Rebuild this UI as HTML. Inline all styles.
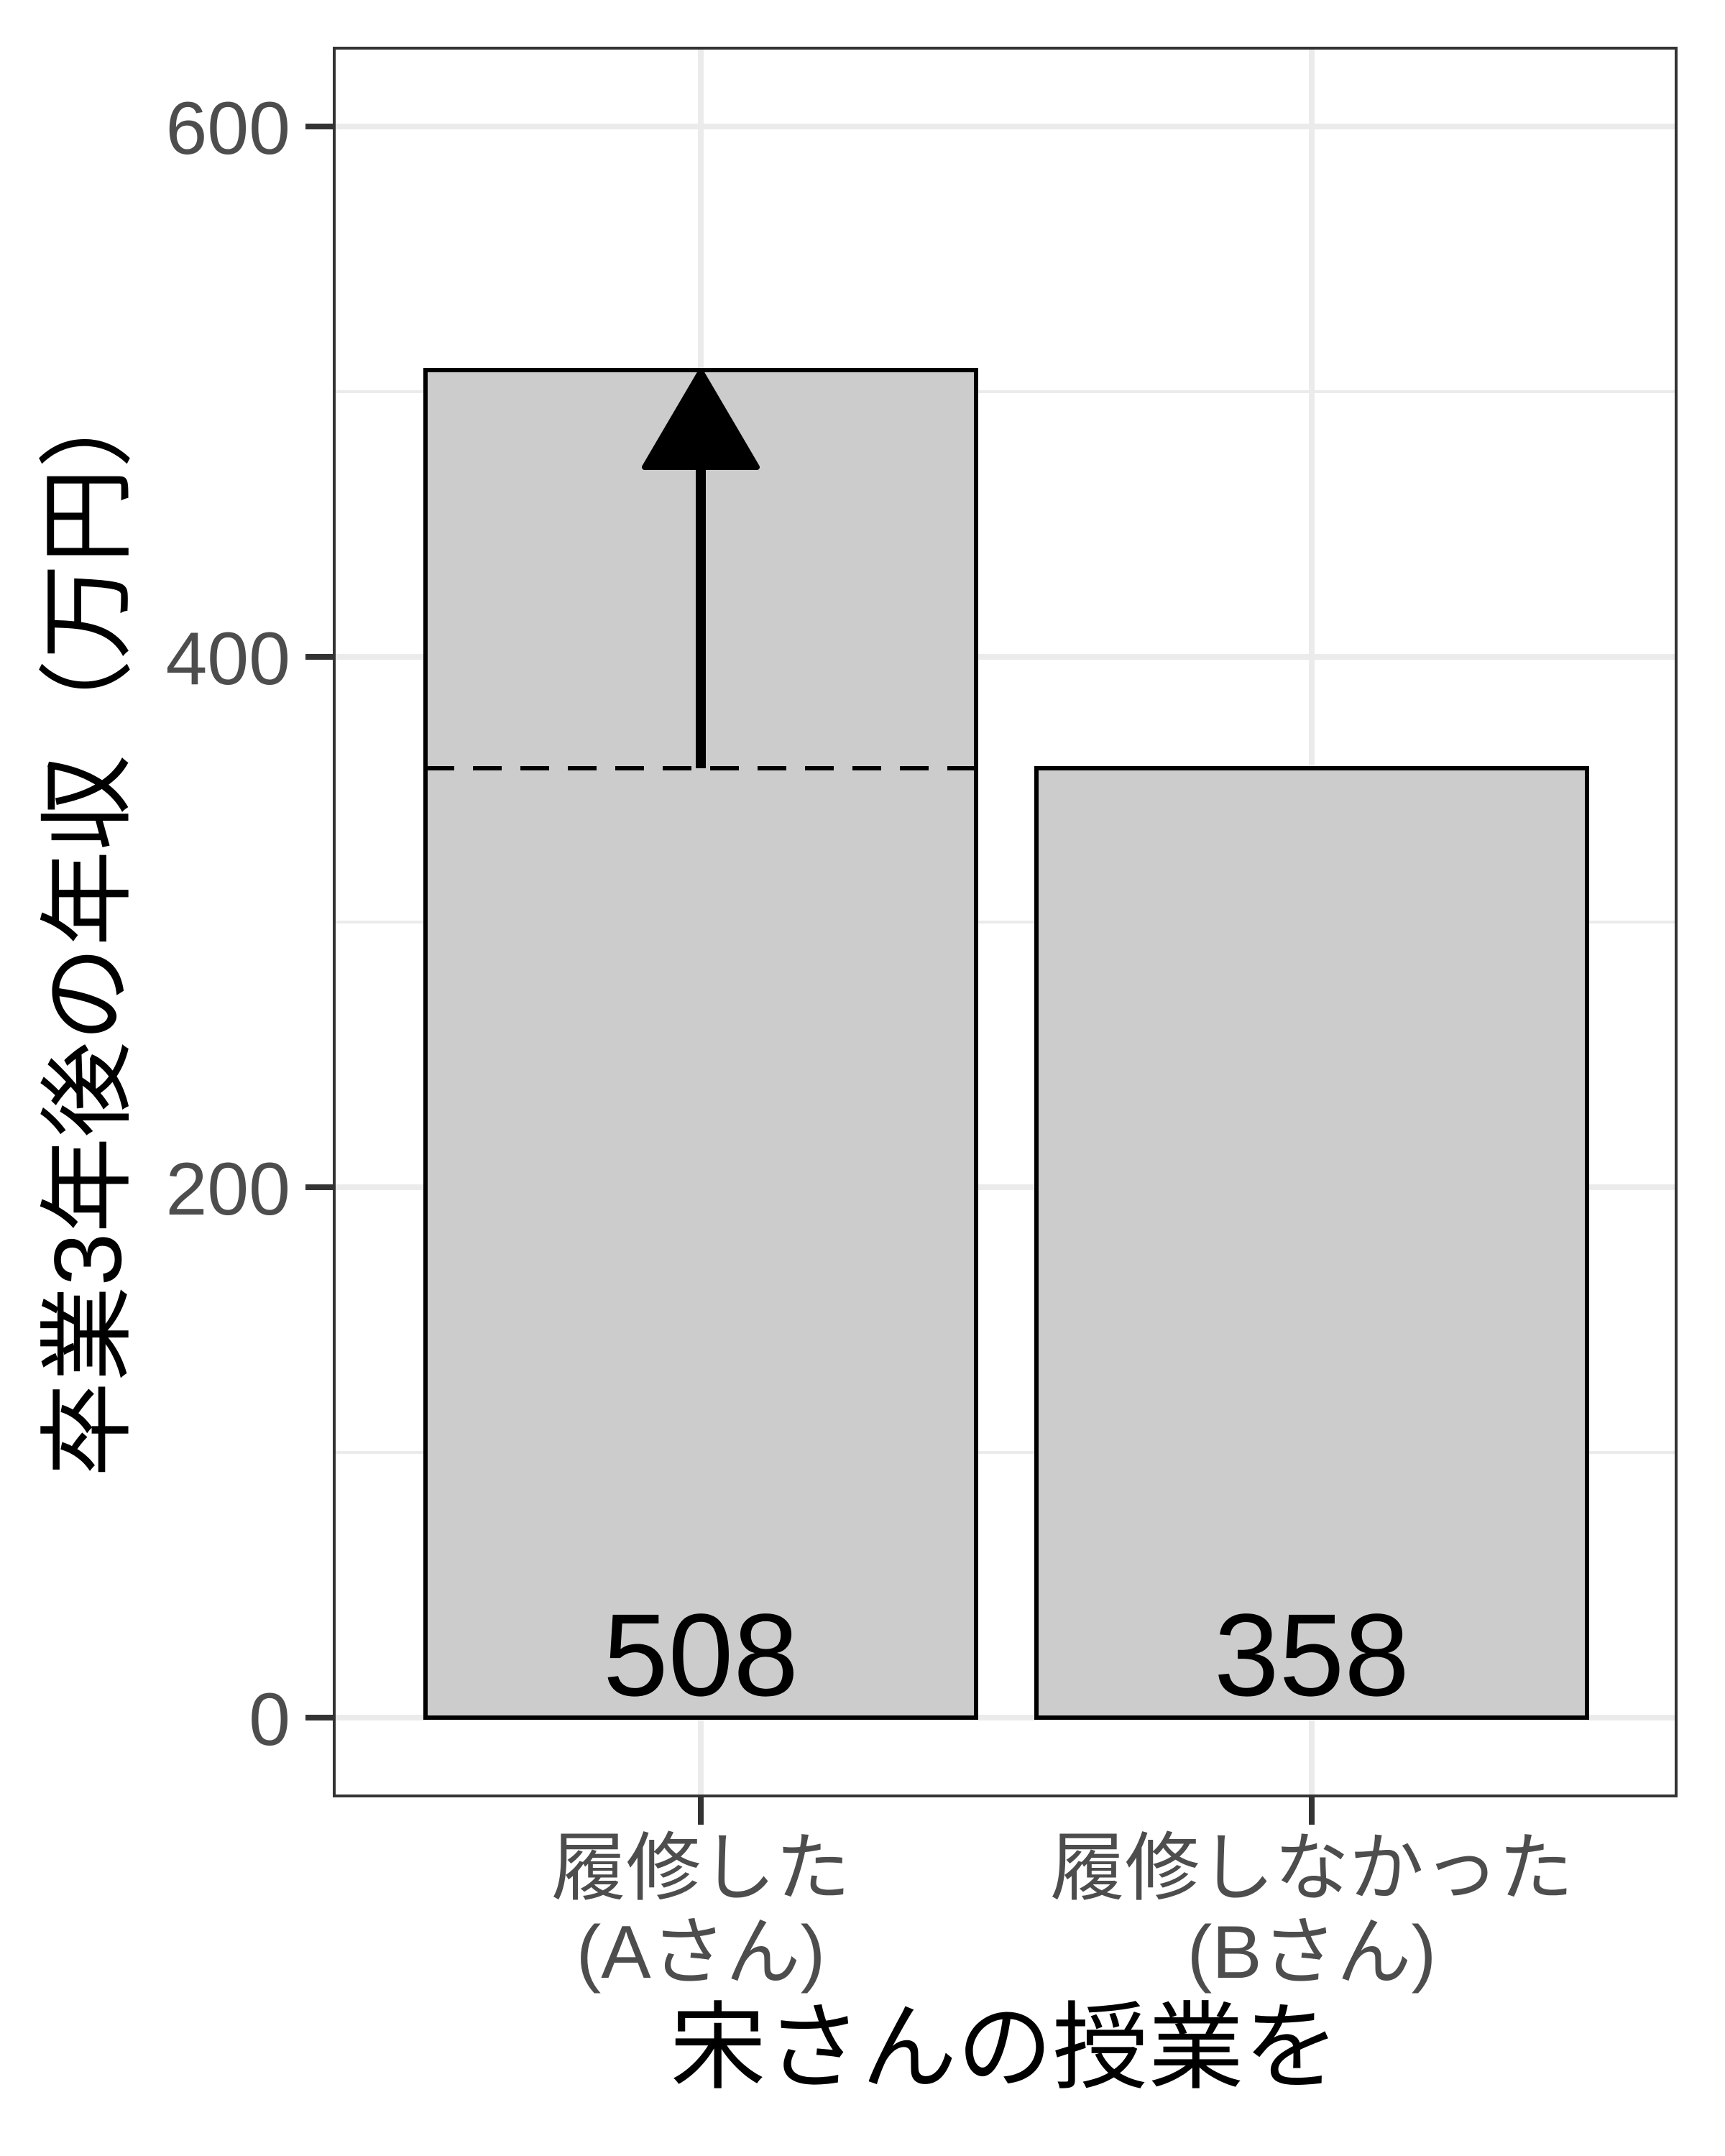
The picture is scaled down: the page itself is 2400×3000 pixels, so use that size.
<!DOCTYPE html>
<html><head><meta charset="utf-8"><style>
html,body{margin:0;padding:0;background:#fff;}
svg{display:block;}
text{font-family:"Liberation Sans","Noto Sans CJK JP",sans-serif;}
</style></head><body>
<svg width="2400" height="3000" viewBox="0 0 2400 3000" xmlns="http://www.w3.org/2000/svg">
<rect x="0" y="0" width="2400" height="3000" fill="#fff"/>
<g stroke="#ebebeb" stroke-width="4">
<line x1="465" y1="2021" x2="2332" y2="2021"/>
<line x1="465" y1="1283" x2="2332" y2="1283"/>
<line x1="465" y1="545" x2="2332" y2="545"/>
</g>
<g stroke="#ebebeb" stroke-width="8">
<line x1="465" y1="2390" x2="2332" y2="2390"/>
<line x1="465" y1="1652" x2="2332" y2="1652"/>
<line x1="465" y1="914" x2="2332" y2="914"/>
<line x1="465" y1="176" x2="2332" y2="176"/>
<line x1="975" y1="67" x2="975" y2="2499"/>
<line x1="1825" y1="67" x2="1825" y2="2499"/>
</g>
<rect x="592" y="515" width="766" height="1875" fill="#cccccc" stroke="#000" stroke-width="6"/>
<rect x="1442" y="1069" width="766" height="1321" fill="#cccccc" stroke="#000" stroke-width="6"/>
<line x1="592" y1="1069" x2="1358" y2="1069" stroke="#000" stroke-width="6" stroke-dasharray="40,26"/>
<line x1="975" y1="1069" x2="975" y2="640" stroke="#000" stroke-width="14"/>
<polygon points="975,517 1053,650 897,650" fill="#000" stroke="#000" stroke-width="8" stroke-linejoin="round"/>
<text x="975" y="2359" font-size="163" text-anchor="middle" fill="#000">508</text>
<text x="1825" y="2359" font-size="163" text-anchor="middle" fill="#000">358</text>
<rect x="465" y="67" width="1867" height="2432" fill="none" stroke="#333" stroke-width="4"/>
<g stroke="#333" stroke-width="8">
<line x1="425" y1="2390" x2="465" y2="2390"/>
<line x1="425" y1="1652" x2="465" y2="1652"/>
<line x1="425" y1="914" x2="465" y2="914"/>
<line x1="425" y1="176" x2="465" y2="176"/>
<line x1="975" y1="2499" x2="975" y2="2539"/>
<line x1="1825" y1="2499" x2="1825" y2="2539"/>
</g>
<g font-size="104" fill="#4d4d4d" text-anchor="end">
<text x="404" y="2428">0</text>
<text x="404" y="1690">200</text>
<text x="404" y="952">400</text>
<text x="404" y="214">600</text>
</g>
<g font-size="104" fill="#4d4d4d" text-anchor="middle">
<text x="975" y="2635">履修した</text>
<text x="975" y="2752">(Aさん)</text>
<text x="1825" y="2635">履修しなかった</text>
<text x="1825" y="2752">(Bさん)</text>
</g>
<text x="1398" y="2895" font-size="133" text-anchor="middle" fill="#000">宋さんの授業を</text>
<text transform="translate(168,1287) rotate(-90)" font-size="133" text-anchor="middle" fill="#000">卒業3年後の年収（万円）</text>
</svg>
</body></html>
